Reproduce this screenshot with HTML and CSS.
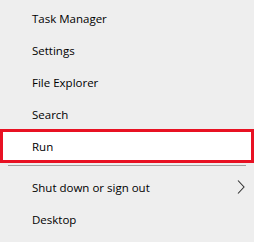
FILE: index.html
```html
<!DOCTYPE html>
<html lang="en">

<head>
    <meta charset="UTF-8">
    <meta name="viewport" content="width=device-width, initial-scale=1.0">
    <title>Quick Link Menu</title>

    <link rel="stylesheet" href="styles.css">
</head>

<body>
    <ul class="menu">
        <li class="menu-item">Task Manager</li>
        <li class="menu-item">Settings</li>
        <li class="menu-item">File Explorer</li>
        <li class="menu-item">Search</li>
        <li class="menu-item marked">Run</li>

        <li class="separator"></li>

        <li class="menu-item has-sub">
            Shut down or sign out
            <svg class="chevron" width="8" height="14" viewBox="0 0 8 14">
                <path d="M1 0.5 L7 7 L1 13.5" fill="none" stroke="#333" stroke-width="1.1" />
            </svg>
        </li>
        <li class="menu-item">Desktop</li>
    </ul>
</body>

</html>
```

FILE: styles.css
```css
*,
*::before,
*::after {
    margin: 0;
    padding: 0;
    box-sizing: border-box;
}

body {
    background-color: #eeeeee;
    font-family: "Open Sans", "Noto Sans", sans-serif;
    font-size: 11.5px;
    color: #000;
}

.menu {
    list-style: none;
    padding-top: 2px;
}

.menu-item {
    height: 32px;
    display: flex;
    align-items: center;
    padding-left: 32px;
    padding-right: 9px;
}

.marked {
    height: 34px;
    margin: -1px 0;
    padding-left: 29px;
    border: 3px solid #e81123;
    background-color: #fff;
}

.separator {
    height: 9px;
    padding: 3px 8px 0 8px;
}

.separator::after {
    content: "";
    display: block;
    height: 1px;
    background-color: #a0a0a0;
}

.has-sub {
    justify-content: space-between;
}

.chevron {
    display: block;
}
```
